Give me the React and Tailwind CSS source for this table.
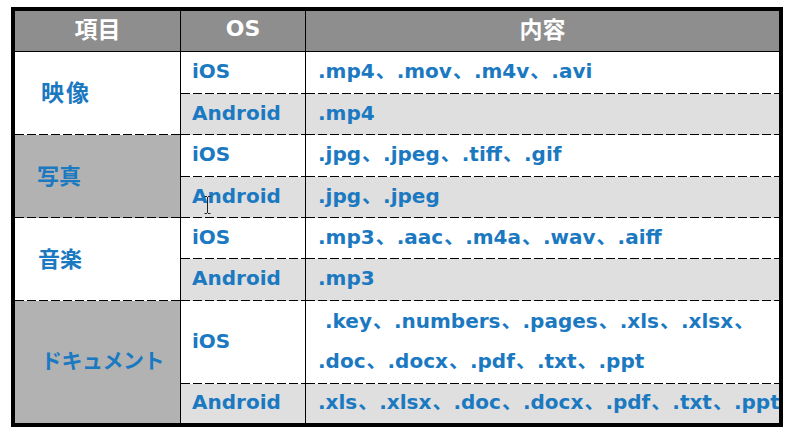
const LATIN = "font-['DejaVu_Sans','Noto_Sans_CJK_JP',sans-serif]";
const CJK = "font-['Noto_Sans_CJK_JP',sans-serif]";
// long dashes like the spreadsheet's dashed rule, drawn on the cell's bottom pixel row
const DASH =
  'bg-[repeating-linear-gradient(90deg,#000_0_9px,transparent_9px_12px)] bg-size-[100%_1px] bg-bottom bg-no-repeat';

const GROUPS = [
  {
    label: '映像',
    labelClass: 'bg-white pl-[26px] tracking-[2px] text-[23px]',
    rows: [
      { os: 'iOS', lines: ['.mp4、.mov、.m4v、.avi'] },
      { os: 'Android', lines: ['.mp4'] },
    ],
  },
  {
    label: '写真',
    labelClass: 'bg-[#b2b2b2] pl-[22px] text-[22px]',
    rows: [
      { os: 'iOS', lines: ['.jpg、.jpeg、.tiff、.gif'] },
      { os: 'Android', lines: ['.jpg、.jpeg'] },
    ],
  },
  {
    label: '音楽',
    labelClass: 'bg-white pl-[23px] text-[22px]',
    rows: [
      { os: 'iOS', lines: ['.mp3、.aac、.m4a、.wav、.aiff'] },
      { os: 'Android', lines: ['.mp3'] },
    ],
  },
  {
    label: 'ドキュメント',
    labelClass: 'bg-[#b2b2b2] pl-[26px] text-[21px] tracking-[-0.5px]',
    rows: [
      { os: 'iOS', lines: ['\u00a0.key、.numbers、.pages、.xls、.xlsx、', '.doc、.docx、.pdf、.txt、.ppt'] },
      { os: 'Android', lines: ['.xls、.xlsx、.doc、.docx、.pdf、.txt、.ppt'] },
    ],
  },
];

function Line({ text }) {
  const parts = text.split('、');
  return (
    <div className="leading-[40px]">
      {parts.map((p, i) => (
        <span key={i}>
          {p}
          {i < parts.length - 1 && <span className="mx-px">、</span>}
        </span>
      ))}
    </div>
  );
}

function TextCursor() {
  return (
    <svg className="absolute left-[204px] top-[196px]" width="7" height="18" viewBox="0 0 7 18">
      <path d="M0.5 0.5h2.5M4 0.5h2.5M3.5 1v16M0.5 17.5h2.5M4 17.5h2.5" stroke="#222" strokeWidth="1" fill="none" />
    </svg>
  );
}

export default function App() {
  return (
    <div className="relative w-[793px] h-[441px] bg-white">
      <div className="absolute left-[11px] top-[7px] w-[772px] h-[420px] border-4 border-black overflow-hidden">
        <div className="grid grid-cols-[166px_125px_473px] grid-rows-[41px_42px_41px_42px_41px_41px_42px_83px_39px] h-full">
          {/* Header */}
          <div className={`${CJK} bg-[#8e8e8e] border-r border-b border-black flex items-center justify-center pb-[6px] text-[23px] font-bold text-white`}>
            項目
          </div>
          <div className={`${LATIN} bg-[#8e8e8e] border-r border-b border-black flex items-center justify-center pb-[6px] text-[22px] font-bold text-white`}>
            OS
          </div>
          <div className={`${CJK} bg-[#8e8e8e] border-b border-black flex items-center justify-center pb-[6px] text-[23px] font-bold text-white`}>
            内容
          </div>

          {GROUPS.map((g, gi) => {
            const lastGroup = gi === GROUPS.length - 1;
            return [
              <div
                key={g.label}
                className={`${CJK} ${g.labelClass} ${lastGroup ? '' : DASH} row-span-2 border-r border-black flex items-center pb-[5px] font-bold text-[#1b79c1]`}
              >
                {g.label}
              </div>,
              ...g.rows.map((r, ri) => {
                const android = ri === 1;
                const noBottom = lastGroup && android;
                const bg = android ? 'bg-[#dfdfdf]' : 'bg-white';
                const bottom = noBottom ? '' : DASH;
                return [
                  <div
                    key={`${g.label}-${r.os}`}
                    className={`${LATIN} ${bg} ${bottom} border-r border-black flex items-center pl-[11px] pb-[4px] text-[20px] font-bold text-[#1b79c1]`}
                  >
                    {r.os}
                  </div>,
                  <div
                    key={`${g.label}-${r.os}-c`}
                    className={`${LATIN} ${bg} ${bottom} flex flex-col justify-center pl-[12px] pb-[4px] text-[20px] font-bold text-[#1b79c1] whitespace-nowrap overflow-hidden`}
                  >
                    {r.lines.map((l) => (
                      <Line key={l} text={l} />
                    ))}
                  </div>,
                ];
              }),
            ];
          })}
        </div>
      </div>
      <TextCursor />
    </div>
  );
}
